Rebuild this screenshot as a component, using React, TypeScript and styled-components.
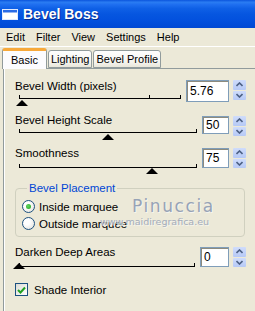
import React from 'react';
import styled, { createGlobalStyle } from 'styled-components';

// --- Global ---

const GlobalStyle = createGlobalStyle`
  html, body {
    margin: 0;
    padding: 0;
    background: #ece9d8;
    overflow: hidden;
  }
  body {
    font-family: "Liberation Sans", Arial, sans-serif;
    font-size: 11px;
    color: #000;
  }
`;

// --- Data ---

const menuItems = ['Edit', 'Filter', 'View', 'Settings', 'Help'];

const tabs = [
  { label: 'Basic', active: true },
  { label: 'Lighting', active: false },
  { label: 'Bevel Profile', active: false }
];

// --- Window chrome ---

const Window = styled.div`
  width: 255px;
  height: 311px;
  display: flex;
  flex-direction: column;
  background: #ece9d8;
  overflow: hidden;
`;

const TitleBar = styled.div`
  height: 28px;
  flex-shrink: 0;
  display: flex;
  align-items: center;
  gap: 5px;
  padding-left: 2px;
  background: linear-gradient(
    to bottom,
    #0b55dd 0%,
    #2a7cf2 8%,
    #1f6ff0 16%,
    #0f60e6 30%,
    #0656e0 50%,
    #0250dd 75%,
    #0049d4 100%
  );
`;

const TitleText = styled.span`
  color: #fff;
  font-family: "Liberation Sans", Arial, sans-serif;
  font-weight: 700;
  font-size: 14px;
  text-shadow: 1px 1px 0 #0a2c8c;
`;

const MenuBar = styled.div`
  height: 19px;
  box-sizing: border-box;
  flex-shrink: 0;
  display: flex;
  align-items: center;
  padding-left: 6px;
  gap: 11px;
  border-bottom: 1px solid #fff;
`;

const MenuItem = styled.span`
  font-size: 11px;
  line-height: 18px;
`;

const TabStrip = styled.div`
  height: 21px;
  flex-shrink: 0;
  display: flex;
  align-items: flex-end;
  padding-left: 2px;
  gap: 1px;
  position: relative;
  z-index: 1;
`;

const Tab = styled.div<{ $active: boolean }>`
  height: ${({ $active }) => ($active ? '21px' : '18px')};
  box-sizing: border-box;
  padding: 0 ${({ $active }) => ($active ? '8px' : '2px')};
  margin-bottom: ${({ $active }) => ($active ? '-1px' : '0')};
  display: flex;
  align-items: center;
  font-size: 11px;
  border: 1px solid #919b9c;
  border-bottom: ${({ $active }) => ($active ? 'none' : '1px solid #919b9c')};
  border-top: ${({ $active }) => ($active ? '3px solid #f7a93a' : '1px solid #919b9c')};
  border-radius: 3px 3px 0 0;
  background: ${({ $active }) =>
    $active ? '#fcfcfe' : 'linear-gradient(to bottom, #fefefe, #f4f3ee 70%, #e8e6da)'};
`;

const Panel = styled.div`
  flex: 1;
  margin-left: 3px;
  border-left: 1px solid #919b9c;
  border-top: 1px solid #919b9c;
  box-shadow: 1px 0 0 #fff inset;
  background: #ece9d8;
  padding: 10px 0 0 11px;
  display: flex;
  flex-direction: column;
`;

// --- Slider rows ---

const SliderRow = styled.div<{ $gap: number }>`
  display: flex;
  align-items: flex-start;
  margin-top: ${({ $gap }) => $gap}px;
`;

const SliderColumn = styled.div<{ $top: number }>`
  flex: 1;
  display: flex;
  flex-direction: column;
  margin-top: ${({ $top }) => $top}px;
`;

const Label = styled.div`
  line-height: 13px;
  height: 13px;
  font-size: 11.5px;
  white-space: nowrap;
`;

const Track = styled.div<{ $lineTop: number }>`
  position: relative;
  height: 12px;
  margin: ${({ $lineTop }) => $lineTop}px 6px 0 4px;
  border-top: 1px solid #000;
`;

const Tick = styled.span<{ $at: number }>`
  position: absolute;
  top: -4px;
  left: ${({ $at }) => $at}%;
  width: 1px;
  height: 4px;
  background: #000;
`;

const Thumb = styled.span<{ $at: number; $top: number }>`
  position: absolute;
  top: ${({ $top }) => $top}px;
  left: calc(${({ $at }) => $at}% - 6px);
  width: 0;
  height: 0;
  border-left: 6px solid transparent;
  border-right: 6px solid transparent;
  border-bottom: 6px solid #000;
`;

const NumberBox = styled.div<{ $w: number; $h: number; $top: number }>`
  width: ${({ $w }) => $w}px;
  height: ${({ $h }) => $h}px;
  margin-top: ${({ $top }) => $top}px;
  box-sizing: border-box;
  border: 1px solid #7f9db9;
  background: #fff;
  box-shadow: 1px 1px 0 #8d8b7e inset;
  padding-left: 3px;
  display: flex;
  align-items: center;
  font-size: 12px;
`;

const Spinner = styled.div<{ $top: number }>`
  width: 13px;
  height: 20px;
  margin: ${({ $top }) => $top}px 9px 0 4px;
  display: flex;
  flex-direction: column;
  gap: 1px;
`;

const SpinButton = styled.div`
  flex: 1;
  display: flex;
  align-items: center;
  justify-content: center;
  background: linear-gradient(to bottom, #cfdcfb, #b6c9f6);
  border-radius: 1px;
`;

const Chevron: React.FC<{ up?: boolean }> = ({ up }) => (
  <svg width="7" height="5" viewBox="0 0 7 5">
    <path
      d={up ? 'M0.5 4 L3.5 1 L6.5 4' : 'M0.5 1 L3.5 4 L6.5 1'}
      fill="none"
      stroke="#4d6185"
      strokeWidth="1.6"
    />
  </svg>
);

// --- Group box ---

const Group = styled.fieldset`
  position: relative;
  margin: 3px 10px 0 0;
  padding: 4px 0 4px 6px;
  border: 1px solid #d0d0bf;
  border-radius: 4px;
  min-inline-size: 0;
`;

const Legend = styled.legend`
  color: #0046d5;
  padding: 0 2px;
  margin-left: 5px;
  font-size: 11.5px;
  line-height: 11px;
`;

const OptionRow = styled.label`
  display: flex;
  align-items: center;
  gap: 4px;
  height: 17px;
  font-size: 11.5px;
`;

const Radio = styled.span<{ $checked: boolean }>`
  width: 13px;
  height: 13px;
  box-sizing: border-box;
  border-radius: 50%;
  border: 1px solid #1c5180;
  background: radial-gradient(circle at 35% 35%, #fff 30%, #dcdcd5 100%);
  display: flex;
  align-items: center;
  justify-content: center;
  &::after {
    content: '';
    display: ${({ $checked }) => ($checked ? 'block' : 'none')};
    width: 5px;
    height: 5px;
    border-radius: 50%;
    background: radial-gradient(circle at 40% 40%, #5fd75f, #21a121);
  }
`;

const Watermark = styled.div`
  position: absolute;
  left: 84px;
  top: 3px;
  display: flex;
  flex-direction: column;
  align-items: flex-start;
  pointer-events: none;
`;

const WatermarkName = styled.span`
  font-family: "DejaVu Sans", sans-serif;
  font-size: 17px;
  letter-spacing: 1.6px;
  margin-left: 32px;
  color: #97a3b6;
  text-shadow: 1px 1px 0 #f6f5ee;
  line-height: 18px;
`;

const WatermarkSite = styled.span`
  font-family: "DejaVu Sans", sans-serif;
  font-size: 9.5px;
  color: #a3acbb;
  text-shadow: 1px 1px 0 #f6f5ee;
  line-height: 12px;
  margin-top: 1px;
`;

// --- Checkbox ---

const CheckRow = styled.label`
  display: flex;
  align-items: center;
  gap: 6px;
  margin-top: 4px;
  height: 13px;
  font-size: 11.5px;
`;

const CheckBox = styled.span`
  width: 13px;
  height: 13px;
  box-sizing: border-box;
  border: 1px solid #1c5180;
  background: linear-gradient(135deg, #dcdcd5, #fff);
  display: flex;
  align-items: center;
  justify-content: center;
`;

// --- Parts ---

interface SliderProps {
  label: string;
  value: string;
  at: number;
  ticks: number[];
  boxW: number;
  boxH: number;
  boxTop: number;
  colTop: number;
  lineTop: number;
  thumbTop: number;
  gap: number;
}

const Slider: React.FC<SliderProps> = (p) => (
  <SliderRow $gap={p.gap}>
    <SliderColumn $top={p.colTop}>
      <Label>{p.label}</Label>
      <Track $lineTop={p.lineTop}>
        {p.ticks.map((t) => (
          <Tick key={t} $at={t} />
        ))}
        <Thumb $at={p.at} $top={p.thumbTop} />
      </Track>
    </SliderColumn>
    <NumberBox $w={p.boxW} $h={p.boxH} $top={p.boxTop}>
      {p.value}
    </NumberBox>
    <Spinner $top={p.boxTop}>
      <SpinButton>
        <Chevron up />
      </SpinButton>
      <SpinButton>
        <Chevron />
      </SpinButton>
    </Spinner>
  </SliderRow>
);

const WindowIcon = () => (
  <svg width="16" height="11" viewBox="0 0 16 11">
    <rect x="0.5" y="0.5" width="15" height="10" fill="#fff" stroke="#dfe9ff" />
    <rect x="1" y="1" width="14" height="2.5" fill="#2a6be6" />
  </svg>
);

export default function App() {
  return (
    <>
      <GlobalStyle />
      <Window>
        <TitleBar>
          <WindowIcon />
          <TitleText>Bevel Boss</TitleText>
        </TitleBar>

        <MenuBar>
          {menuItems.map((m) => (
            <MenuItem key={m}>{m}</MenuItem>
          ))}
        </MenuBar>

        <TabStrip>
          {tabs.map((t) => (
            <Tab key={t.label} $active={t.active}>
              {t.label}
            </Tab>
          ))}
        </TabStrip>

        <Panel>
          <Slider
            label="Bevel Width (pixels)"
            value="5.76"
            at={2}
            ticks={[0, 81, 100]}
            boxW={43}
            boxH={22}
            boxTop={1}
            colTop={1}
            lineTop={5}
            thumbTop={1}
            gap={0}
          />
          <Slider
            label="Bevel Height Scale"
            value="50"
            at={50}
            ticks={[0, 100]}
            boxW={27}
            boxH={18}
            boxTop={2}
            colTop={0}
            lineTop={5}
            thumbTop={1}
            gap={3}
          />
          <Slider
            label="Smoothness"
            value="75"
            at={75}
            ticks={[0, 100]}
            boxW={27}
            boxH={20}
            boxTop={1}
            colTop={0}
            lineTop={7}
            thumbTop={0}
            gap={2}
          />

          <Group>
            <Legend>Bevel Placement</Legend>
            <OptionRow>
              <Radio $checked />
              Inside marquee
            </OptionRow>
            <OptionRow>
              <Radio $checked={false} />
              Outside marquee
            </OptionRow>
            <Watermark>
              <WatermarkName>Pinuccia</WatermarkName>
              <WatermarkSite>www.maidiregrafica.eu</WatermarkSite>
            </Watermark>
          </Group>

          <Slider
            label="Darken Deep Areas"
            value="0"
            at={0}
            ticks={[0, 100]}
            boxW={29}
            boxH={20}
            boxTop={1}
            colTop={0}
            lineTop={7}
            thumbTop={-4}
            gap={9}
          />

          <CheckRow>
            <CheckBox>
              <svg width="9" height="8" viewBox="0 0 9 8">
                <path d="M1 4 L3.5 6.5 L8 1.5" fill="none" stroke="#21a121" strokeWidth="2" />
              </svg>
            </CheckBox>
            Shade Interior
          </CheckRow>
        </Panel>
      </Window>
    </>
  );
}
